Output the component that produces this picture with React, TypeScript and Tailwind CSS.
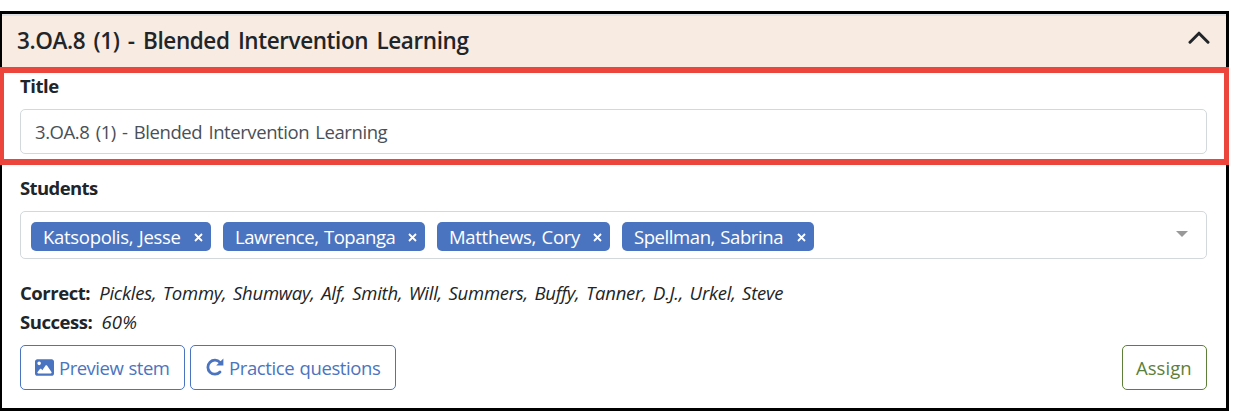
import React from "react";
import { FaImage } from "react-icons/fa6";

type Student = { name: string; chip: string; label: string };

const students: Student[] = [
  { name: "Katsopolis, Jesse", chip: "w-[180px]", label: "tracking-[-0.3px] [word-spacing:1px]" },
  { name: "Lawrence, Topanga", chip: "w-[202px]", label: "tracking-[-0.45px] [word-spacing:1px]" },
  { name: "Matthews, Cory", chip: "w-[173px]", label: "tracking-[-0.3px] [word-spacing:1px]" },
  { name: "Spellman, Sabrina", chip: "w-[192px]", label: "tracking-[-0.42px] [word-spacing:1px]" },
];

function StudentChip({ name, chip, label }: Student) {
  return (
    <span
      className={`flex h-[29px] shrink-0 items-center justify-between rounded-[5px] bg-[#4b74c0] pr-[8px] pl-[12px] text-[18.5px] text-white ${chip}`}
    >
      <span className={`whitespace-nowrap ${label}`}>{name}</span>
      <svg className="mt-[2px] size-[9px]" viewBox="0 0 9 9" fill="none" stroke="currentColor" strokeWidth="1.8">
        <path d="M1 1l7 7M8 1L1 8" />
      </svg>
    </span>
  );
}

export default function App() {
  return (
    <div className="h-[416px] w-[1236px] overflow-hidden bg-white pt-[11px] font-['Open_Sans','Noto_Sans',sans-serif] text-[18.5px] text-[#212529]">
      <div className="flex h-[400px] w-[1229px] flex-col border-t-[3px] border-r-[3px] border-b-[3px] border-l-2 border-black bg-white">
        <header className="flex h-[53px] items-center justify-between border-t-2 border-[#dfe0e3] bg-[#f8ebe2] pr-[16px] pl-[15px]">
          <h1 className="mb-[2px] text-[22.5px] leading-[48px] font-semibold tracking-[-0.42px] whitespace-nowrap [word-spacing:3px]">
            3.OA.8 (1) - Blended Intervention Learning
          </h1>
          <svg
            className="mb-[8px] h-[13px] w-[22px]"
            viewBox="0 0 22 13"
            fill="none"
            stroke="currentColor"
            strokeWidth="3"
            strokeLinecap="round"
            strokeLinejoin="round"
          >
            <path d="M2 11.2L11 2.2L20 11.2" />
          </svg>
        </header>

        <section className="relative h-[98px] px-[18px] pt-[5px]">
          <div className="pointer-events-none absolute top-0 -right-[3px] bottom-0 -left-[2px] border-t-[6px] border-r-[5px] border-b-[6px] border-l-4 border-[#ec463c]" />
          <label className="block h-[37px] leading-[28px] font-bold tracking-[-0.45px]">Title</label>
          <div className="flex h-[45px] w-[1187px] items-center rounded-[5px] border border-[#d3d8dc] px-[14px] tracking-[-0.42px] text-[#495057] [word-spacing:1.8px]">
            3.OA.8 (1) - Blended Intervention Learning
          </div>
        </section>

        <section className="flex grow flex-col px-[18px] pt-[9px]">
          <label className="block h-[37px] leading-[28px] font-bold tracking-[-0.6px]">Students</label>
          <div className="flex h-[48px] w-[1187px] items-center justify-between rounded-[5px] border border-[#d3d8dc] pr-[18px] pl-[10px]">
            <div className="flex gap-[12px] pt-[3px]">
              {students.map((student) => (
                <StudentChip key={student.name} {...student} />
              ))}
            </div>
            <svg className="mb-[2px] h-[6px] w-[12px]" viewBox="0 0 12 6" fill="#999999">
              <path d="M0 0H12L6 6Z" />
            </svg>
          </div>

          <div className="mt-[19px] leading-[29px]">
            <p className="flex gap-[9px] whitespace-nowrap">
              <b className="tracking-[-0.45px]">Correct:</b>
              <i className="tracking-[-0.24px] [word-spacing:2px]">
                Pickles, Tommy, Shumway, Alf, Smith, Will, Summers, Buffy, Tanner, D.J., Urkel, Steve
              </i>
            </p>
            <p className="flex gap-[9px] whitespace-nowrap">
              <b className="tracking-[-0.45px]">Success:</b>
              <i className="tracking-[0.2px]">60%</i>
            </p>
          </div>

          <div className="mt-[9px] flex w-[1187px] gap-[5px]">
            <button className="flex h-[45px] w-[165px] items-center gap-[5px] rounded-[5px] border border-[#4b74c0] pl-[14px] whitespace-nowrap text-[#4b74c0]">
              <FaImage className="size-[19px] shrink-0" />
              <span className="tracking-[-0.5px] [word-spacing:1px]">Preview stem</span>
            </button>
            <button className="flex h-[45px] w-[206px] items-center gap-[5px] rounded-[5px] border border-[#4b74c0] pl-[15px] whitespace-nowrap text-[#4b74c0]">
              <svg className="mb-[2px] size-[18px] shrink-0" viewBox="0 0 18 18" fill="none" stroke="currentColor">
                <path d="M14 14A7 7 0 1 1 14 4.4" strokeWidth="2.8" strokeLinecap="round" />
                <path d="M17.4 0.6V7.6H10.2Z" fill="currentColor" stroke="none" />
              </svg>
              <span className="tracking-[-0.4px] [word-spacing:1px]">Practice questions</span>
            </button>
            <button className="ml-auto flex h-[45px] w-[85px] items-center rounded-[5px] border border-[#5d7f38] pl-[13px] whitespace-nowrap text-[#5d7f38]">
              <span className="tracking-[0.05px]">Assign</span>
            </button>
          </div>
        </section>
      </div>
    </div>
  );
}
